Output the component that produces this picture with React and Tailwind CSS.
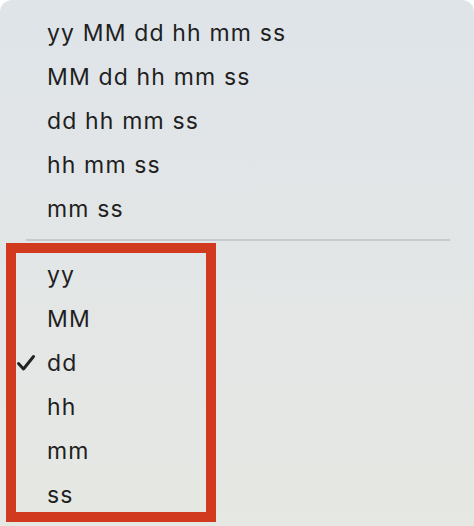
import React from "react";

const fullFormats = ["yy MM dd hh mm ss", "MM dd hh mm ss", "dd hh mm ss", "hh mm ss", "mm ss"];
const units = ["yy", "MM", "dd", "hh", "mm", "ss"];

const Check = () => (
  <svg width="20" height="18" viewBox="0 0 20 18" className="text-[#222]">
    <path d="M2.5 9.5 L7.5 15 L17.5 2.5" fill="none" stroke="currentColor" strokeWidth="3" strokeLinecap="round" strokeLinejoin="round" />
  </svg>
);

const MenuItem = ({ label, checked }) => (
  <div className="relative flex h-[44px] items-center pl-[47px]">
    {checked && (
      <span className="absolute left-[16px] top-[13px]">
        <Check />
      </span>
    )}
    <span>{label}</span>
  </div>
);

export default function App() {
  return (
    <div className="bg-white">
      <div
        className="relative h-[526px] w-[474px] overflow-hidden rounded-t-[12px] bg-gradient-to-b from-[#dfe4e9] to-[#e6e8e3] pt-[11px] text-[23px] tracking-[0.05em] text-[#1f1f1f]"
        style={{ fontFamily: "Inter, 'Liberation Sans', sans-serif" }}
      >
        {fullFormats.map((f) => (
          <MenuItem key={f} label={f} />
        ))}
        <div className="my-[8px] ml-[26px] mr-[24px] h-[2px] bg-[#c6cacf]" />
        <div className="pt-[4px]">
          {units.map((u) => (
            <MenuItem key={u} label={u} checked={u === "dd"} />
          ))}
        </div>
        {/* highlight box */}
        <div className="pointer-events-none absolute left-[6px] top-[243px] h-[279px] w-[210px] border-[10px] border-[#d23a20]" />
      </div>
    </div>
  );
}
